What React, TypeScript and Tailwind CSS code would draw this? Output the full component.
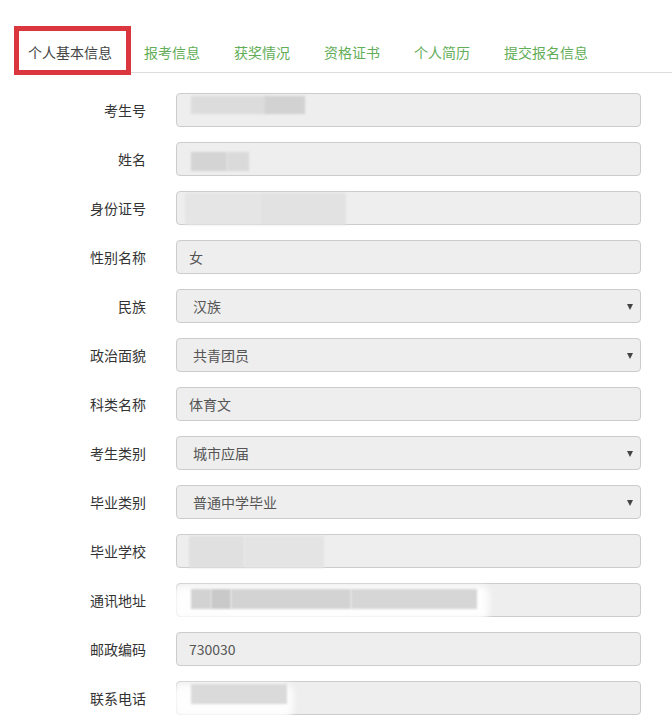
import React from 'react';

type Blot = { left: number; top: number; width: number; height: number; color: string };

type Field = {
  label: string;
  value?: string;
  select?: boolean;
  blots?: Blot[];
  glow?: { left: number; width: number };
};

const fields: Field[] = [
  {
    label: '考生号',
    blots: [
      { left: 14, top: 2, width: 76, height: 18, color: '#dcdcdc' },
      { left: 88, top: 2, width: 40, height: 18, color: '#d2d2d2' },
    ],
  },
  {
    label: '姓名',
    blots: [
      { left: 14, top: 9, width: 36, height: 19, color: '#d4d4d4' },
      { left: 50, top: 9, width: 22, height: 19, color: '#dadada' },
    ],
  },
  {
    label: '身份证号',
    blots: [
      { left: 8, top: 1, width: 75, height: 32, color: '#e5e5e5' },
      { left: 83, top: 1, width: 86, height: 32, color: '#e2e2e2' },
    ],
  },
  { label: '性别名称', value: '女' },
  { label: '民族', value: '汉族', select: true },
  { label: '政治面貌', value: '共青团员', select: true },
  { label: '科类名称', value: '体育文' },
  { label: '考生类别', value: '城市应届', select: true },
  { label: '毕业类别', value: '普通中学毕业', select: true },
  {
    label: '毕业学校',
    blots: [
      { left: 12, top: 1, width: 55, height: 32, color: '#e0e0e0' },
      { left: 67, top: 1, width: 80, height: 32, color: '#e4e4e4' },
    ],
  },
  {
    label: '通讯地址',
    glow: { left: -4, width: 316 },
    blots: [
      { left: 14, top: 5, width: 20, height: 20, color: '#d2d2d2' },
      { left: 34, top: 5, width: 20, height: 20, color: '#c9c9c9' },
      { left: 54, top: 5, width: 120, height: 20, color: '#d3d3d3' },
      { left: 174, top: 5, width: 126, height: 20, color: '#d6d6d6' },
    ],
  },
  { label: '邮政编码', value: '730030' },
  {
    label: '联系电话',
    glow: { left: -4, width: 120 },
    blots: [{ left: 14, top: 2, width: 96, height: 20, color: '#dadada' }],
  },
];

const tabs = ['报考信息', '获奖情况', '资格证书', '个人简历', '提交报名信息'];

function FieldRow({ field }: { field: Field }) {
  return (
    <div className="flex items-center mb-[15px]">
      <div className="w-[146px] text-right text-[14px] text-[#333]">{field.label}</div>
      <div className="relative ml-[30px] w-[465px] h-[34px] rounded-[4px] border border-[#cccccc] bg-[#eeeeee] flex items-center pl-[12px] text-[14px] text-[#555]">
        {field.glow && (
          <div
            className="absolute top-[2px] h-[34px] rounded-[8px] bg-white/90 blur-[3px]"
            style={{ left: field.glow.left, width: field.glow.width }}
          />
        )}
        {field.blots?.map((b, i) => (
          <div
            key={i}
            className="absolute blur-[1px]"
            style={{ left: b.left, top: b.top, width: b.width, height: b.height, backgroundColor: b.color }}
          />
        ))}
        {field.value && <span className={field.select ? 'pl-[4px]' : ''}>{field.value}</span>}
        {field.select && (
          <span className="absolute right-[7px] top-[14px] w-0 h-0 border-l-[3px] border-r-[3px] border-t-[6px] border-l-transparent border-r-transparent border-t-[#444]" />
        )}
      </div>
    </div>
  );
}

export default function App() {
  return (
    <div
      className="w-[672px] h-[721px] overflow-hidden bg-white"
      style={{ fontFamily: '"Noto Sans CJK SC", "Liberation Sans", sans-serif' }}
    >
      {/* Tabs */}
      <div className="pt-[26px] pl-[14px]">
        <div className="flex items-start h-[47px] border-b border-[#dddddd]">
          <div className="relative z-10 h-[49px] pt-[11px] pb-[8px] pl-[9px] pr-[14px] border-[5px] border-[#d9363e] bg-white text-[14px] leading-[20px] text-[#444]">
            个人基本信息
          </div>
          <div className="flex ml-[-3px]">
            {tabs.map((t) => (
              <div key={t} className="pt-[16px] px-[16px] mr-[2px] text-[14px] leading-[20px] text-[#62ad57]">
                {t}
              </div>
            ))}
          </div>
        </div>
      </div>

      {/* Form */}
      <div className="pt-[20px]">
        {fields.map((f) => (
          <FieldRow key={f.label} field={f} />
        ))}
      </div>
    </div>
  );
}
